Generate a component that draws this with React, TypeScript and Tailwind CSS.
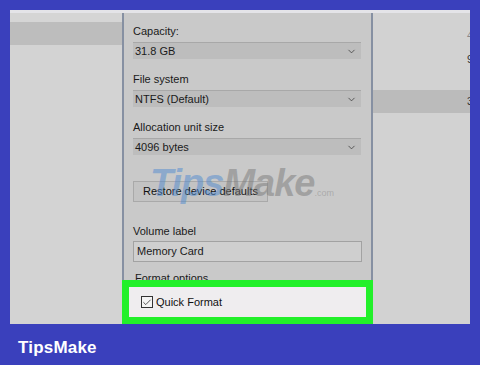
import { Check, ChevronDown } from "lucide-react";

const font = { fontFamily: '"Liberation Sans", Arial, sans-serif' };

function Select({ value }: { value: string }) {
  return (
    <div className="mt-[4px] h-[17px] w-[228px] flex items-center justify-between bg-[#bdbdbd] border-t border-[#a8a8a8] pl-[2px] pr-[4px]">
      <span className="text-[11px] text-[#1a1a1a] leading-none">{value}</span>
      <ChevronDown size={11} strokeWidth={1.6} className="text-[#333]" />
    </div>
  );
}

function Field({ label, value }: { label: string; value: string }) {
  return (
    <div className="flex flex-col">
      <span className="text-[11px] leading-[13px] text-[#1a1a1a]">{label}</span>
      <Select value={value} />
    </div>
  );
}

export default function App() {
  return (
    <div className="w-[480px] h-[365px] bg-[#3a40bc] flex flex-col pt-[10px]" style={font}>
      <div className="h-[314px] mx-[10px] flex bg-[#d2d2d2] border-t-[3px] border-[#e4e4e8] overflow-hidden">
        {/* left list */}
        <div className="w-[112px] flex flex-col">
          <div className="h-[9px] bg-[#d5d5d5]" />
          <div className="h-[23px] bg-[#bdbdbd]" />
          <div className="flex-1 bg-[#d3d3d3]" />
        </div>

        {/* format dialog */}
        <div className="relative w-[251px] flex flex-col bg-[#c9c9c9] border-x-2 border-[#8690a2]">
          <div className="flex-1 flex flex-col pl-[9px] pt-[12px] gap-[14px]">
            <Field label="Capacity:" value="31.8 GB" />
            <Field label="File system" value="NTFS (Default)" />
            <Field label="Allocation unit size" value="4096 bytes" />
            <div className="mt-[12px] h-[21px] w-[135px] border border-[#a9a9a9] bg-[#c3c3c3] flex items-center justify-center">
              <span className="text-[11px] text-[#111]">Restore device defaults</span>
            </div>
            <div className="mt-[9px] flex flex-col">
              <span className="text-[11px] leading-[13px] text-[#1a1a1a]">Volume label</span>
              <div className="mt-[3px] h-[21px] w-[229px] border border-[#a2a2a2] bg-[#cfcfcf] flex items-center pl-[3px]">
                <span className="text-[11px] text-[#1a1a1a]">Memory Card</span>
              </div>
            </div>
            <div className="mt-[-4px] h-[8px] overflow-hidden pl-[2px]">
              <span className="block text-[11px] leading-[13px] text-[#1a1a1a]">Format options</span>
            </div>
          </div>
          <div className="-mx-[2px] h-[44px] border-[7px] border-[#22f02a] bg-[#efedef] flex items-center pl-[12px]">
            <div className="w-[12px] h-[12px] border border-[#333] bg-[#f4f4f4] flex items-center justify-center">
              <Check size={11} strokeWidth={1.8} className="text-[#222]" />
            </div>
            <span className="ml-[3px] text-[11px] text-[#111]">Quick Format</span>
          </div>

          {/* watermark */}
          <div className="absolute left-[26px] top-[151px] flex items-baseline italic font-bold pointer-events-none whitespace-nowrap">
            <span className="text-[38px] leading-none text-[#4f8ad0]/50 tracking-[-1px]">Tips</span>
            <span className="text-[38px] leading-none text-[#7a7a7a]/50 tracking-[-1px]">Make</span>
            <span className="text-[9px] not-italic font-normal text-[#8a8a8a]/50">.com</span>
          </div>
        </div>

        {/* right list */}
        <div className="flex-1 flex flex-col text-[11px] text-[#333] overflow-hidden">
          <div className="h-[9px] bg-[#d2d2d2]" />
          <div className="h-[68px] bg-[#d2d2d2] pl-[94px] leading-none whitespace-nowrap">
            <div className="pt-[8px] text-[#555]/60">4</div>
            <div className="pt-[13px]">9</div>
          </div>
          <div className="h-[23px] bg-[#bbbbbb] pl-[94px] pt-[6px] leading-none whitespace-nowrap">3</div>
          <div className="flex-1 bg-[#d2d2d2]" />
        </div>
      </div>

      <div className="flex-1 flex items-center pl-[18px] pt-[6px]">
        <span className="text-[17px] font-bold text-white tracking-[0.2px]">TipsMake</span>
      </div>
    </div>
  );
}
